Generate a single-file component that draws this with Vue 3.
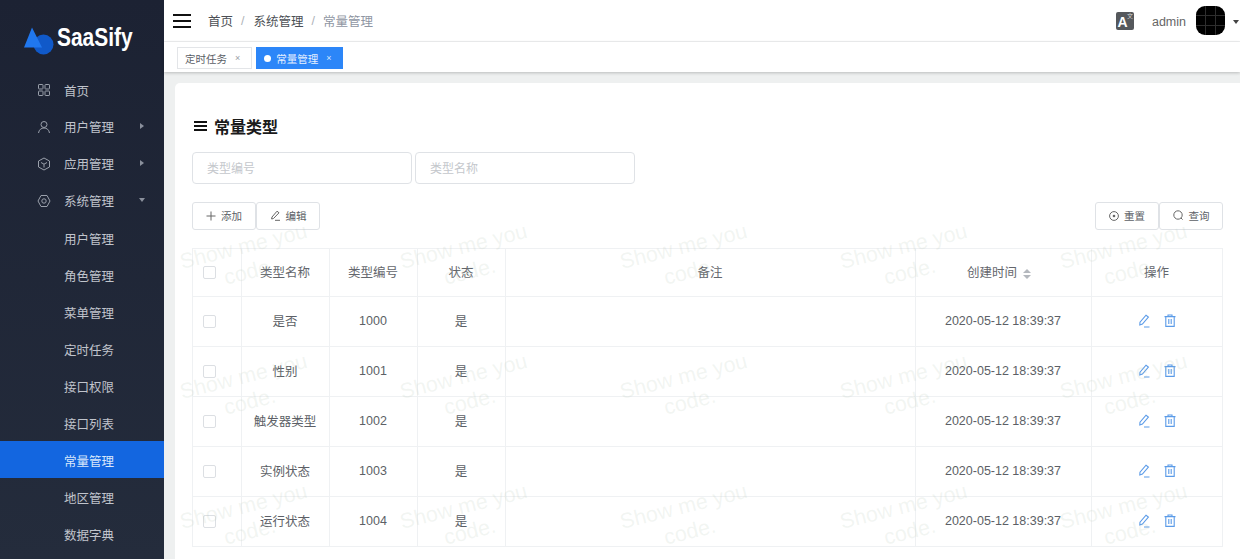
<script setup>
const groups = [
  { label: '首页', icon: 'grid' },
  { label: '用户管理', icon: 'user', arrow: 'to-right' },
  { label: '应用管理', icon: 'box', arrow: 'to-right' },
  { label: '系统管理', icon: 'gear', arrow: 'to-down' }
]
const subs = ['用户管理', '角色管理', '菜单管理', '定时任务', '接口权限', '接口列表', '常量管理', '地区管理', '数据字典']
const rows = [
  { name: '是否', code: 1000 },
  { name: '性别', code: 1001 },
  { name: '触发器类型', code: 1002 },
  { name: '实例状态', code: 1003 },
  { name: '运行状态', code: 1004 }
]
const marks = Array.from({ length: 15 })
</script>

<template>
  <div class="app">
    <aside class="side">
      <div class="logo">
        <svg class="logo-mark" width="31" height="30" viewBox="0 0 31 30">
          <circle cx="20.5" cy="17.5" r="10" fill="#1059c9" />
          <path d="M9 0.5 L19 20.5 L1 20.5 Z" fill="#2077ee" />
        </svg>
        <span class="logo-text">SaaSify</span>
      </div>
      <nav class="menu">
        <div v-for="g in groups" :key="g.label" class="item">
          <svg class="mi" width="14" height="14" viewBox="0 0 14 14" fill="none" stroke="#9aa0ab" stroke-width="1">
            <template v-if="g.icon === 'grid'">
              <rect x="1.5" y="1.5" width="4.5" height="4.5" rx=".6" />
              <rect x="8" y="1.5" width="4.5" height="4.5" rx=".6" />
              <rect x="1.5" y="8" width="4.5" height="4.5" rx=".6" />
              <rect x="8" y="8" width="4.5" height="4.5" rx=".6" />
            </template>
            <template v-else-if="g.icon === 'user'">
              <circle cx="7" cy="4.5" r="3" />
              <path d="M1.5 13 C2 9.5 4.5 8 7 8 C9.5 8 12 9.5 12.5 13" />
            </template>
            <template v-else-if="g.icon === 'box'">
              <path d="M7 1 L12.5 4 V10 L7 13 L1.5 10 V4 Z" />
              <path d="M4 5.5 L7 7.2 L10 5.5 M7 7.2 V10.5" />
            </template>
            <template v-else>
              <path d="M4 1.5 H10 L13 7 L10 12.5 H4 L1 7 Z" />
              <circle cx="7" cy="7" r="2.2" />
            </template>
          </svg>
          <span>{{ g.label }}</span>
          <i v-if="g.arrow" :class="['arrow', g.arrow]"></i>
        </div>
        <div class="subs">
          <div v-for="s in subs" :key="s" :class="['sub', { on: s === '常量管理' }]">{{ s }}</div>
        </div>
      </nav>
    </aside>

    <div class="main">
      <header class="top">
        <div class="burger"><i></i><i></i><i></i></div>
        <div class="crumb">
          <span>首页</span><b class="first">/</b><span>系统管理</span><b>/</b><span class="last">常量管理</span>
        </div>
        <div class="tools">
          <div class="lang"><span class="la">A</span><span class="lz">文</span></div>
          <span class="admin">admin</span>
          <div class="avatar"></div>
          <i class="caret"></i>
        </div>
      </header>
      <div class="tags">
        <div class="tag">定时任务<span class="x">×</span></div>
        <div class="tag active"><i class="dot"></i>常量管理<span class="x">×</span></div>
      </div>
      <div class="body">
        <section class="card">
          <h2 class="title"><span class="bars"><i></i><i></i><i></i></span>常量类型</h2>
          <div class="filters">
            <input class="ipt" placeholder="类型编号" />
            <input class="ipt" placeholder="类型名称" />
          </div>
          <div class="actions">
            <div class="btns">
              <button class="btn">
                <svg width="10" height="10" viewBox="0 0 10 10" stroke="#666" fill="none"><path d="M5 .5V9.5M.5 5H9.5" /></svg>添加
              </button>
              <button class="btn">
                <svg width="11" height="11" viewBox="0 0 11 11" stroke="#666" fill="none"><path d="M7 1.2 L9 2.8 L3.5 8.5 L1.6 9 L2 7 Z M5 10.3 H10" /></svg>编辑
              </button>
            </div>
            <div class="btns">
              <button class="btn">
                <svg width="10" height="10" viewBox="0 0 10 10" stroke="#666" fill="none"><circle cx="5" cy="5" r="4.4" /><circle cx="5" cy="5" r="1.3" fill="#666" stroke="none" /></svg>重置
              </button>
              <button class="btn">
                <svg width="11" height="11" viewBox="0 0 11 11" stroke="#666" fill="none"><circle cx="5" cy="5" r="4.2" /><path d="M8 8 L9.6 9.6" /></svg>查询
              </button>
            </div>
          </div>
          <table class="tbl">
            <colgroup>
              <col class="c1" /><col class="c2" /><col class="c2" /><col class="c2" />
              <col class="c3" /><col class="c4" /><col class="c5" />
            </colgroup>
            <thead>
              <tr>
                <th class="cb"><i class="check"></i></th>
                <th>类型名称</th>
                <th>类型编号</th>
                <th>状态</th>
                <th>备注</th>
                <th>创建时间<span class="sort"><i class="up"></i><i class="dn"></i></span></th>
                <th>操作</th>
              </tr>
            </thead>
            <tbody>
              <tr v-for="r in rows" :key="r.code">
                <td class="cb"><i class="check"></i></td>
                <td>{{ r.name }}</td>
                <td>{{ r.code }}</td>
                <td>是</td>
                <td></td>
                <td>2020-05-12 18:39:37</td>
                <td>
                  <span class="ops">
                    <svg width="13" height="14" viewBox="0 0 13 14" fill="none" stroke="#5b9be8" stroke-width="1.1">
                      <path d="M8 1.2 L10.4 3 L4.4 10 L1.8 11 L2 8.2 Z M6 13 H11.5" />
                    </svg>
                    <svg width="12" height="13" viewBox="0 0 12 13" fill="none" stroke="#5b9be8" stroke-width="1.1">
                      <path d="M.5 2.6 H11.5 M4 2.6 V1 H8 V2.6 M1.8 2.6 V12.4 H10.2 V2.6 M4.8 5 V10 M7.2 5 V10" />
                    </svg>
                  </span>
                </td>
              </tr>
            </tbody>
          </table>
        </section>
      </div>
    </div>

    <div class="marks">
      <div v-for="(m, i) in marks" :key="i" class="mark">Show me you<br />code.</div>
    </div>
  </div>
</template>

<style>
html, body { margin: 0; overflow: hidden; background: #fff; }
</style>

<style scoped>
.app {
  position: relative;
  display: flex;
  width: 1240px;
  height: 559px;
  overflow: hidden;
  font-family: "Liberation Sans", "Noto Sans CJK SC", sans-serif;
  color: #606266;
}
.side {
  width: 164px;
  flex: none;
  background: linear-gradient(#1c2233, #242c3c);
  color: #c0c4cc;
}
.logo {
  height: 71px;
  display: flex;
  align-items: flex-start;
  padding: 27px 0 0 23px;
  box-sizing: border-box;
}
.logo-text {
  margin: -6px 0 0 3px;
  font-size: 26.5px;
  line-height: 32px;
  font-weight: 700;
  color: #fff;
  transform: scaleX(.79);
  transform-origin: left;
}
.item {
  position: relative;
  height: 37px;
  display: flex;
  align-items: center;
  padding-left: 37px;
  font-size: 12.5px;
  box-sizing: border-box;
}
.item:first-child { padding-top: 1px; }
.mi { margin-right: 13px; }
.arrow { position: absolute; width: 0; height: 0; }
.arrow.to-right { right: 20px; top: 15px; border-left: 4px solid #8a909c; border-top: 3.5px solid transparent; border-bottom: 3.5px solid transparent; }
.arrow.to-down { right: 19px; top: 16px; border-top: 4px solid #8a909c; border-left: 3.5px solid transparent; border-right: 3.5px solid transparent; }
.sub {
  height: 37px;
  line-height: 37px;
  padding: 3px 0 0 64px;
  box-sizing: border-box;
  font-size: 12.5px;
}
.sub.on { background: #1366e0; color: #d8e6fb; }
.main { flex: 1; min-width: 0; display: flex; flex-direction: column; }
.top {
  height: 42px;
  flex: none;
  display: flex;
  align-items: center;
  padding: 0 0 0 9px;
  box-sizing: border-box;
  border-bottom: 1px solid #f0f1f2;
}
.burger { width: 18px; display: flex; flex-direction: column; gap: 4px; }
.burger i { height: 2px; background: #111; display: block; }
.crumb { margin-left: 17px; font-size: 12.5px; color: #4c4f55; display: flex; align-items: center; }
.crumb b { margin: 0 8px; font-weight: 400; color: #aeb2b8; }
.crumb b.first { margin-right: 9px; }
.crumb .last { color: #8f96a3; }
.tools { margin-left: auto; display: flex; align-items: center; height: 100%; }
.lang {
  position: relative;
  width: 18px;
  height: 18px;
  border-radius: 2px;
  background: #55585c;
  color: #fff;
  margin-right: 18px;
}
.la { position: absolute; left: 1.5px; top: 3px; font-size: 14px; font-weight: 700; line-height: 14px; }
.lz { position: absolute; right: 1px; top: 1px; font-size: 6px; line-height: 7px; color: #d5d5d5; }
.admin { font-size: 12.5px; color: #666; margin: 2px 10px 0 0; }
.avatar {
  width: 29px;
  height: 29px;
  border-radius: 9px;
  background:
    linear-gradient(90deg, transparent 9px, #2e2e2e 9px, #2e2e2e 10px, transparent 10px, transparent 19px, #2e2e2e 19px, #2e2e2e 20px, transparent 20px),
    linear-gradient(transparent 9px, #2e2e2e 9px, #2e2e2e 10px, transparent 10px, transparent 19px, #2e2e2e 19px, #2e2e2e 20px, transparent 20px),
    #000;
}
.caret { margin: 2px 1px 0 8px; width: 0; height: 0; border-top: 4px solid #444; border-left: 3.5px solid transparent; border-right: 3.5px solid transparent; }
.tags {
  height: 30px;
  flex: none;
  display: flex;
  align-items: flex-start;
  gap: 4px;
  padding: 5px 0 0 13px;
  box-sizing: border-box;
  box-shadow: 0 1px 3px rgba(0, 0, 0, .22);
  position: relative;
}
.tag {
  height: 22px;
  padding: 0 11px 0 7px;
  border: 1px solid #e3e5e8;
  box-sizing: border-box;
  display: flex;
  align-items: center;
  font-size: 10.5px;
  color: #5a5e66;
  background: #fff;
}
.x { margin-left: 8px; font-size: 9px; color: #9a9ea5; }
.tag.active { background: #2c86f8; border-color: #2c86f8; color: #e6f0ff; padding-right: 10px; }
.tag.active .x { color: #d5e5fc; }
.dot { width: 7px; height: 7px; border-radius: 50%; background: #fff; margin-right: 5px; }
.body { flex: 1; min-height: 0; background: #eef0f0; padding: 11px 0 0 11px; }
.card {
  background: #fff;
  border-radius: 5px 0 0 0;
  height: 100%;
  box-sizing: border-box;
  padding: 31px 18px 0 17px;
}
.title {
  margin: 0;
  height: 24px;
  display: flex;
  align-items: center;
  font-size: 16px;
  font-weight: 700;
  color: #1b1b1b;
}
.bars { width: 13px; display: flex; flex-direction: column; gap: 2px; margin: 0 7px 0 2px; }
.bars i { display: block; height: 2px; background: #111; }
.filters { display: flex; gap: 3px; margin-top: 14px; }
.ipt {
  width: 220px;
  height: 32px;
  box-sizing: border-box;
  border: 1px solid #dfe2e6;
  border-radius: 4px;
  padding: 1px 14px 0;
  font: 12px "Liberation Sans", "Noto Sans CJK SC", sans-serif;
  background: transparent;
  outline: none;
}
.ipt::placeholder { color: #c4c7cc; }
.actions { display: flex; justify-content: space-between; margin: 18px -1px 0 0; }
.btns { display: flex; }
.btn {
  width: 64px;
  height: 28px;
  box-sizing: border-box;
  display: flex;
  align-items: center;
  justify-content: center;
  gap: 5px;
  background: #fff;
  border: 1px solid #dfe2e6;
  border-radius: 3px;
  font: 10.5px "Liberation Sans", "Noto Sans CJK SC", sans-serif;
  color: #5c5f66;
  padding: 0 0 1px;
}
.tbl {
  table-layout: fixed;
  width: 1030px;
  margin-top: 18px;
  border-collapse: collapse;
  font-size: 12.5px;
}
.c1 { width: 49px; }
.c2 { width: 88px; }
.c3 { width: 410px; }
.c4 { width: 176px; }
.c5 { width: 131px; }
.tbl th, .tbl td {
  border: 1px solid #eff1f3;
  text-align: center;
  padding: 0 1px 2px 0;
  height: 47px;
  color: #5c5f66;
  font-weight: 400;
}
.tbl th { height: 45px; color: #63666c; }
.tbl .cb { text-align: left; padding-left: 10px; }
.check {
  display: inline-block;
  width: 13px;
  height: 13px;
  box-sizing: border-box;
  border: 1px solid #dcdfe3;
  border-radius: 2px;
  vertical-align: middle;
}
.sort { display: inline-flex; flex-direction: column; gap: 2px; margin: 0 8px 0 6px; vertical-align: middle; }
.sort i { width: 0; height: 0; border-left: 4px solid transparent; border-right: 4px solid transparent; display: block; }
.sort .up { border-bottom: 4px solid #b4b8be; }
.sort .dn { border-top: 4px solid #b4b8be; }
.ops { display: inline-flex; align-items: center; gap: 13px; vertical-align: middle; }
.marks {
  position: absolute;
  left: 170px;
  top: 212px;
  width: 1100px;
  display: grid;
  grid-template-columns: repeat(5, 220px);
  grid-auto-rows: 130px;
  pointer-events: none;
}
.mark {
  height: 130px;
  width: 150px;
  padding: 22px 0 0 12px;
  box-sizing: border-box;
  font-size: 21.5px;
  line-height: 26px;
  text-align: center;
  color: rgba(175, 195, 175, .17);
  transform: rotate(-14deg);
  white-space: nowrap;
}
</style>
